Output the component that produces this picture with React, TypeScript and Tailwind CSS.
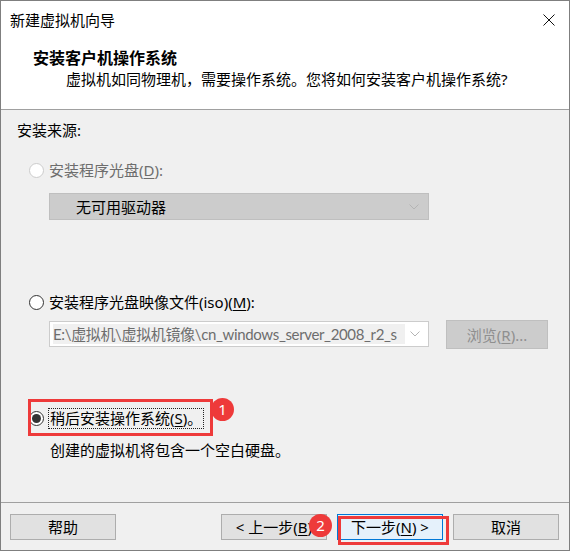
import type { ReactNode } from 'react';

const font = "font-[family-name:'Noto_Sans','Noto_Sans_CJK_SC',sans-serif]";

function Key({ children }: { children: ReactNode }) {
  return <span className="underline underline-offset-2 decoration-1">{children}</span>;
}

function Radio({ checked = false, disabled = false }: { checked?: boolean; disabled?: boolean }) {
  return (
    <span
      className={`flex h-[15px] w-[15px] shrink-0 items-center justify-center rounded-full border bg-white ${
        disabled ? 'border-[#cccccc]' : 'border-[#333333]'
      }`}
    >
      {checked && <span className="h-[9px] w-[9px] rounded-full bg-[#333333]" />}
    </span>
  );
}

function Chevron() {
  return (
    <svg width="10" height="6" viewBox="0 0 10 6" className="shrink-0">
      <polyline points="0.5,0.5 5,5 9.5,0.5" fill="none" stroke="#b4b4b4" strokeWidth="1" />
    </svg>
  );
}

function Badge({ n, className }: { n: number; className: string }) {
  return (
    <span
      className={`absolute flex h-[23px] w-[23px] items-center justify-center rounded-full bg-[#ee3a3a] text-[15px] leading-none text-white ${className}`}
    >
      {n}
    </span>
  );
}

function Button({ children, className = '' }: { children: ReactNode; className?: string }) {
  return (
    <div
      className={`relative flex h-[26px] w-[106px] items-center justify-center border text-[15px] leading-[20px] ${className}`}
    >
      {children}
    </div>
  );
}

export default function App() {
  return (
    <div className={`${font} flex h-[551px] w-[570px] flex-col border border-[#7f7f7f] bg-[#f0f0f0] text-black`}>
      {/* header */}
      <div className="h-[109px] shrink-0 border-b border-[#a0a0a0] bg-white">
        <div className="flex h-[37px] items-center justify-between pl-[9px] pr-[14px]">
          <span className="text-[15px] leading-[20px]">新建虚拟机向导</span>
          <svg width="12" height="12" viewBox="0 0 12 12">
            <path d="M0.5 0.5 L11.5 11.5 M11.5 0.5 L0.5 11.5" stroke="#111" strokeWidth="1" />
          </svg>
        </div>
        <div className="mt-[10px] pl-[32px] text-[16px] font-bold leading-[20px]">安装客户机操作系统</div>
        <div className="mt-[1px] pl-[65px] text-[15px] leading-[20px]">
          虚拟机如同物理机，需要操作系统。您将如何安装客户机操作系统?
        </div>
      </div>

      {/* body */}
      <div className="flex flex-1 flex-col text-[15px] leading-[20px]">
        <div className="mt-[10px] pl-[16px]">安装来源:</div>

        <div className="mt-[20px] flex h-[20px] items-center gap-[5px] pl-[28px] text-[#6d6d6d]">
          <Radio disabled />
          <span>
            安装程序光盘(<Key>D</Key>):
          </span>
        </div>

        <div className="ml-[48px] mt-[13px] flex h-[27px] w-[380px] items-center justify-between border border-[#bfbfbf] bg-[#cccccc] pl-[26px] pr-[9px]">
          <span>无可用驱动器</span>
          <Chevron />
        </div>

        <div className="mt-[72px] flex h-[20px] items-center gap-[5px] pl-[28px]">
          <Radio />
          <span>
            安装程序光盘映像文件(iso)(<Key>M</Key>):
          </span>
        </div>

        <div className="mt-[8px] flex items-start pl-[48px]">
          <div className="mt-[1px] flex h-[26px] w-[380px] items-center border border-[#cccccc] bg-white pl-[3px] pr-[8px]">
            <div className="h-[20px] w-[352px] overflow-hidden whitespace-nowrap bg-[#f0f0f0] font-[family-name:'Lato','Noto_Sans_CJK_SC',sans-serif] tracking-[-0.35px] text-[#6d6d6d]">
              E:\虚拟机\虚拟机镜像\cn_windows_server_2008_r2_s
            </div>
            <span className="flex flex-1 justify-end">
              <Chevron />
            </span>
          </div>
          <div className="ml-[17px] flex h-[29px] w-[102px] items-center justify-center border border-[#bfbfbf] bg-[#cccccc] text-[#8f8f8f]">
            浏览(<Key>R</Key>)...
          </div>
        </div>

        <div className="relative mt-[59px] flex h-[20px] items-center gap-[4px] pl-[28px]">
          <Radio checked />
          <span className="border border-dotted border-[#222] px-[1px] leading-[19px]">
            稍后安装操作系统(<Key>S</Key>)。
          </span>
          <span className="absolute left-[27px] top-[-9px] h-[37px] w-[185px] border-[3px] border-[#ee3a3a]" />
          <Badge n={1} className="left-[210px] top-[-10px]" />
        </div>

        <div className="mt-[12px] pl-[49px]">创建的虚拟机将包含一个空白硬盘。</div>
      </div>

      {/* footer */}
      <div className="flex h-[48px] shrink-0 items-start justify-between border-t border-[#a0a0a0] pl-[9px] pr-[10px] pt-[11px]">
        <Button className="border-[#adadad] bg-[#e1e1e1]">帮助</Button>
        <div className="flex gap-[10px]">
          <Button className="border-[#adadad] bg-[#e1e1e1]">
            &lt; 上一步(<Key>B</Key>)
          </Button>
          <Button className="border-[#0078d7] bg-[#e5f1fb]">
            下一步(<Key>N</Key>) &gt;
            <span className="absolute left-[0px] top-[1px] h-[29px] w-[111px] border-[3px] border-[#ee3a3a]" />
            <Badge n={2} className="left-[-29px] top-[-1px]" />
          </Button>
          <Button className="border-[#adadad] bg-[#e1e1e1]">取消</Button>
        </div>
      </div>
    </div>
  );
}
